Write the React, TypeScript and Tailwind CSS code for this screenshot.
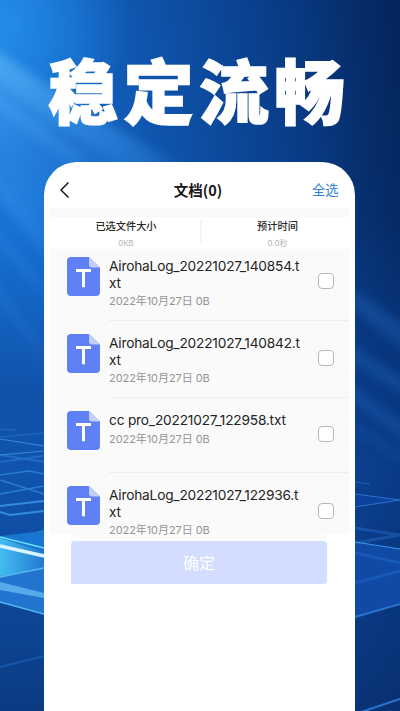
type FileEntry = { lines: string[]; pad: string; height: string; box: string };

const files: FileEntry[] = [
  { lines: ['AirohaLog_20221027_140854.t', 'xt'], pad: 'pt-2', height: 'h-[72px]', box: 'mt-[16px]' },
  { lines: ['AirohaLog_20221027_140842.t', 'xt'], pad: 'pt-[13px]', height: 'h-[77px]', box: 'mt-[16px]' },
  { lines: ['cc pro_20221027_122958.txt'], pad: 'pt-[13px]', height: 'h-[75px]', box: 'mt-[15px]' },
  { lines: ['AirohaLog_20221027_122936.t', 'xt'], pad: 'pt-[13px]', height: 'h-[61px]', box: 'mt-[17px]' },
];

function Backdrop() {
  return (
    <svg className="absolute inset-0 h-full w-full" viewBox="0 0 400 711" preserveAspectRatio="none">
      <defs>
        <linearGradient id="base" gradientUnits="userSpaceOnUse" x1="0" y1="60" x2="400" y2="0">
          <stop offset="0" stopColor="#1873d6" />
          <stop offset=".3" stopColor="#1059b4" />
          <stop offset=".65" stopColor="#0a3f8c" />
          <stop offset="1" stopColor="#04265d" />
        </linearGradient>
        <linearGradient id="lower" x1="0" y1="0" x2="0" y2="1">
          <stop offset=".3" stopColor="#0c479b" stopOpacity="0" />
          <stop offset=".56" stopColor="#0c4296" stopOpacity=".7" />
          <stop offset=".66" stopColor="#0d479e" stopOpacity=".7" />
          <stop offset="1" stopColor="#0a3478" stopOpacity=".9" />
        </linearGradient>
        <radialGradient id="glow" gradientUnits="userSpaceOnUse" cx="0" cy="25" r="130">
          <stop offset="0" stopColor="#2796f0" stopOpacity=".75" />
          <stop offset="1" stopColor="#2796f0" stopOpacity="0" />
        </radialGradient>
        <linearGradient id="ray" gradientUnits="userSpaceOnUse" x1="0" y1="50" x2="210" y2="270">
          <stop offset="0" stopColor="#5fb8fa" stopOpacity=".7" />
          <stop offset=".5" stopColor="#3c97ee" stopOpacity=".42" />
          <stop offset="1" stopColor="#2c81df" stopOpacity="0" />
        </linearGradient>
        <linearGradient id="cyan" x1="0" y1="0" x2="1" y2="0">
          <stop offset="0" stopColor="#42bdf0" />
          <stop offset="1" stopColor="#2479d0" />
        </linearGradient>
        <linearGradient id="rightShade" x1="0" y1="0" x2="1" y2="0">
          <stop offset=".8" stopColor="#031f53" stopOpacity="0" />
          <stop offset="1" stopColor="#031f53" stopOpacity=".2" />
        </linearGradient>
        <filter id="soft" x="-20%" y="-20%" width="140%" height="140%">
          <feGaussianBlur stdDeviation="5" />
        </filter>
      </defs>
      <rect width="400" height="711" fill="url(#base)" />
      <rect width="400" height="711" fill="url(#lower)" />
      <rect width="400" height="711" fill="url(#glow)" />
      <g fill="url(#ray)" filter="url(#soft)">
        <path d="M-10 46L60 92L180 165L60 235L-10 170Z" opacity=".5" />
        <path d="M-10 46L50 88L165 162L125 170L-10 78Z" opacity=".65" />
        <path d="M-10 88L90 160L75 168L-10 102Z" opacity=".5" />
        <path d="M-10 170L50 228V262L-10 188Z" opacity=".7" />
        <path d="M-10 220L50 290V305L-10 235Z" opacity=".5" />
        <path d="M-10 270L50 355V375L-10 290Z" opacity=".5" />
      </g>
      <rect width="400" height="711" fill="url(#rightShade)" />
      <g fill="#2266bd" filter="url(#soft)" opacity=".38">
        <path d="M350 287L405 325V352L350 306Z" />
        <path d="M350 345L405 380V396L350 360Z" />
        <path d="M350 385L405 425V440L350 398Z" />
        <path d="M350 418L405 455V466L350 429Z" opacity=".5" />
      </g>
      <g fill="none" stroke="#3c9cec" opacity=".8">
        <path d="M0 429L17 430M0 437L44 433" opacity=".45" />
        <path d="M0 439L44 446M0 455L44 451" />
        <path d="M0 462L43 456M0 455L44 462" strokeWidth="2" opacity=".45" />
        <path d="M0 475L29 471L44 474M0 480L44 494M0 494L44 486" strokeWidth="1.5" opacity=".7" />
        <path d="M0 506L44 501M0 512L10 515L44 511" strokeWidth="2" />
        <path d="M0 541L44 531" stroke="#50b4ef" strokeWidth="1.3" />
      </g>
      <path d="M0 536L44 531V600L0 588Z" fill="#1976d0" />
      <path d="M0 538L44 552V569L0 577Z" fill="url(#cyan)" />
      <path d="M0 576L44 569V613L0 602Z" fill="#2374ce" />
      <path d="M0 582L44 593V598L0 590Z" fill="#58a9ea" />
      <path d="M0 537L44 548" stroke="#68dfff" strokeWidth="1.5" />
      <path d="M0 546L44 556" stroke="#d8f5ff" strokeWidth="3.5" />
      <path d="M0 577L44 568M0 602L44 614" stroke="#57b7f1" strokeWidth="1.5" />
      <path d="M0 667L44 656" stroke="#1c69bf" strokeWidth="2" opacity=".55" />
      <path d="M355 494L400 500L355 507Z" fill="#0b429b" />
      <path d="M355 542L400 549V603L355 617Z" fill="#1049a6" />
      <g fill="none" stroke="#2874cf">
        <path d="M355 482L370 484" opacity=".6" />
        <path d="M355 494L400 500L355 507" strokeWidth="1" />
        <path d="M355 528L400 535L355 543" strokeWidth="3" opacity=".4" />
        <path d="M355 542L400 549" stroke="#3e97ed" strokeWidth="1.2" />
        <path d="M355 553L400 563M355 583L400 571" strokeWidth="3" opacity=".4" />
        <path d="M355 617L400 604M355 714L400 699" strokeWidth="2" />
      </g>
    </svg>
  );
}

function TextFileIcon() {
  return (
    <svg className="h-[39px] w-[33px] shrink-0" viewBox="0 0 33 39">
      <path d="M4 0H22L33 10.5V35a4 4 0 0 1-4 4H4a4 4 0 0 1-4-4V4a4 4 0 0 1 4-4Z" fill="#6080f5" />
      <path d="M22 0L33 10.5H25a3 3 0 0 1-3-3Z" fill="#c2cffc" />
      <path d="M9 13.6H24M16.5 13.6V30.3" stroke="#fff" strokeWidth="3" fill="none" />
    </svg>
  );
}

function FileRow({ file, last }: { file: FileEntry; last: boolean }) {
  return (
    <div className={`flex pl-[17px] ${file.height}`}>
      <div className={file.pad}>
        <TextFileIcon />
      </div>
      <div className={`ml-[9px] flex flex-1 ${file.pad} ${last ? '' : 'border-b border-[#eeeeee]'}`}>
        <div className="w-[209px] whitespace-nowrap">
          {file.lines.map((line) => (
            <div key={line} className="h-[16.5px] text-[13.7px] leading-[18px] tracking-[-0.19px] text-[#242424]">
              {line}
            </div>
          ))}
          <div className="mt-[3px] text-[11px] leading-[16px] tracking-[-0.07px] text-[#959595]">2022年10月27日 0B</div>
        </div>
        <div className={`h-4 w-4 rounded-[4px] border border-[#b8b8b8] bg-white ${file.box}`} />
      </div>
    </div>
  );
}

export default function App() {
  return (
    <main className="relative h-[711px] w-[400px] overflow-hidden bg-[#0b469c] font-['Inter','Noto_Sans_CJK_SC',sans-serif]">
      <Backdrop />
      <div className="relative flex h-full flex-col">
        <h1 className="h-[162px] whitespace-nowrap pl-[48px] pt-[39px] font-['Noto_Sans_CJK_SC',sans-serif] text-[70px] leading-[100px] font-black tracking-[5.5px] text-white [-webkit-text-stroke:1.5px_white]">
          稳定流畅
        </h1>
        <section className="ml-[44px] w-[311px] flex-1 rounded-t-[33px] bg-white px-[6px]">
          <header className="flex h-[46px] items-center pt-[10px]">
            <svg className="ml-[10px] h-[16px] w-[9px]" viewBox="0 0 9 16" fill="none" stroke="#171717" strokeWidth="1.5">
              <path d="M8.5 .5L1 8L8.5 15.5" />
            </svg>
            <div className="ml-[54px] w-[150px] text-center font-['Noto_Sans_CJK_SC',sans-serif] text-[14.5px] leading-5 font-bold text-[#171717]">文档(0)</div>
            <div className="ml-[39px] whitespace-nowrap text-[13.3px] leading-5 text-[#3280d5]">全选</div>
          </header>
          <div className="h-[9px] bg-[#f9f9f9]" />
          <div className="flex h-[32px]">
            <div className="w-[151px] pl-[2px] text-center">
              <div className="text-[10.2px] leading-[18px] font-medium text-[#282828]">已选文件大小</div>
              <div className="pt-[1px] text-[8px] leading-[15px] text-[#b5b5b5]">0KB</div>
            </div>
            <div className="mt-[2px] h-[26px] w-[2px] bg-[#f5f5f5]" />
            <div className="w-[148px] pl-[4px] text-center">
              <div className="text-[10.2px] leading-[18px] font-medium text-[#282828]">预计时间</div>
              <div className="pt-[1px] text-[8px] leading-[15px] text-[#b5b5b5]">0.0秒</div>
            </div>
          </div>
          <div className="w-[299px] bg-[#fafafa]">
            {files.map((file, index) => (
              <FileRow key={file.lines[0]} file={file} last={index === files.length - 1} />
            ))}
          </div>
          <div className="ml-[21px] h-[7px] w-[256px] bg-[#fcfcfc]" />
          <button className="ml-[21px] flex h-[43px] w-[256px] items-center justify-center rounded-[4px] rounded-bl-none bg-[#d2ddff] text-[16px] text-white">
            确定
          </button>
        </section>
      </div>
    </main>
  );
}
